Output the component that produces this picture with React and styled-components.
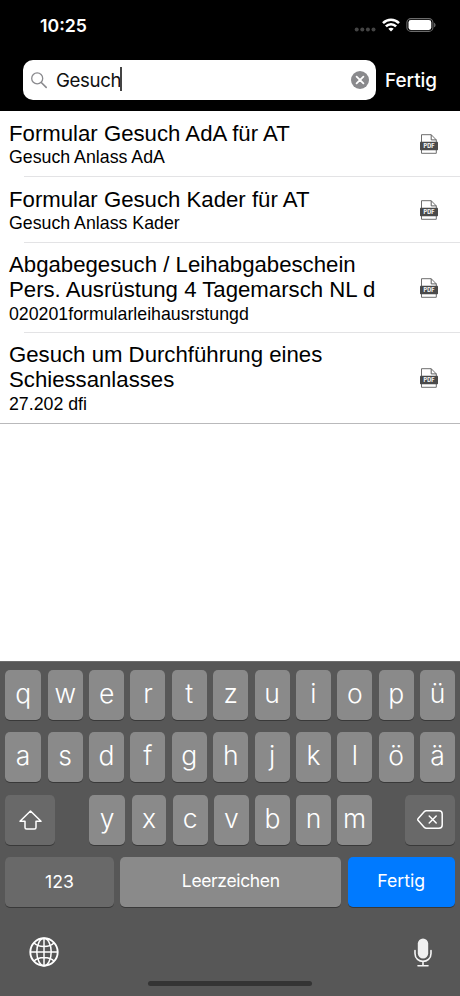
import styled, { createGlobalStyle } from "styled-components"

const results = [
    { title: "Formular Gesuch AdA für AT", subtitle: "Gesuch Anlass AdA", height: 66 },
    { title: "Formular Gesuch Kader für AT", subtitle: "Gesuch Anlass Kader", height: 66 },
    { title: "Abgabegesuch / Leihabgabeschein Pers. Ausrüstung 4 Tagemarsch NL d", subtitle: "020201formularleihausrstungd", height: 90 },
    { title: "Gesuch um Durchführung eines Schiessanlasses", subtitle: "27.202 dfi", height: 91 },
];

const App = () => {
    return (
        <Screen>
            <GlobalStyle />

            <StatusBar>
                <Clock>10:25</Clock>
                <StatusIcons>
                    <CellDots />
                    <WifiIcon />
                    <BatteryIcon />
                </StatusIcons>
            </StatusBar>

            <SearchBar>
                <SearchField>
                    <SearchIcon />
                    <SearchText>Gesuch</SearchText>
                    <Caret />
                    <ClearButton><ClearIcon /></ClearButton>
                </SearchField>
                <DoneButton>Fertig</DoneButton>
            </SearchBar>

            <ResultList>
                {results.map((item) => (
                    <ResultRow key={item.title} $height={item.height}>
                        <ResultContent>
                            <ResultTitle>{item.title}</ResultTitle>
                            <ResultSubtitle>{item.subtitle}</ResultSubtitle>
                        </ResultContent>
                        <PdfIcon />
                    </ResultRow>
                ))}
            </ResultList>

            <Keyboard>
                <KeyRow>
                    {[..."qwertzuiopü"].map((letter) => <LetterKey key={letter}>{letter}</LetterKey>)}
                </KeyRow>
                <KeyRow>
                    {[..."asdfghjklöä"].map((letter) => <LetterKey key={letter}>{letter}</LetterKey>)}
                </KeyRow>
                <KeyRow $split>
                    <ActionKey $width={50}><ShiftIcon /></ActionKey>
                    <LetterGroup>
                        {[..."yxcvbnm"].map((letter) => <LetterKey key={letter}>{letter}</LetterKey>)}
                    </LetterGroup>
                    <ActionKey $width={50}><BackspaceIcon /></ActionKey>
                </KeyRow>
                <KeyRow>
                    <ActionKey $width={109}>123</ActionKey>
                    <SpaceKey>Leerzeichen</SpaceKey>
                    <ActionKey $width={107.5} $primary>Fertig</ActionKey>
                </KeyRow>
                <KeyboardFooter>
                    <GlobeIcon />
                    <MicIcon />
                </KeyboardFooter>
                <HomeIndicator />
            </Keyboard>
        </Screen>
    )
};

const CellDots = () => (
    <svg width="22" height="18" viewBox="0 0 22 18" fill="#444">
        <circle cx="2.7" cy="13.5" r="2" />
        <circle cx="8.3" cy="13.5" r="2" />
        <circle cx="13.9" cy="13.5" r="2" />
        <circle cx="19.5" cy="13.5" r="2" />
    </svg>
);

const WifiIcon = () => (
    <svg width="18" height="14" viewBox="0 0 18 14" fill="none" stroke="#fff" strokeWidth="2.6">
        <path d="M1 5.1C5.6 .7 12.4 .7 17 5.1" />
        <path d="M3.9 8.4C6.8 5.5 11.2 5.5 14.1 8.4" />
        <path d="M9 13.4L6.3 10.7C7.8 9.3 10.2 9.3 11.7 10.7Z" fill="#fff" stroke="none" />
    </svg>
);

const BatteryIcon = () => (
    <svg width="30" height="14" viewBox="0 0 30 14">
        <rect x=".9" y=".6" width="26" height="12.8" rx="4" fill="none" stroke="#6b6b6b" strokeWidth="1.1" />
        <rect x="2.5" y="2.1" width="22.8" height="9.8" rx="2.4" fill="#fff" />
        <path d="M28.2 4.7C29.9 5.4 29.9 8.6 28.2 9.3Z" fill="#777" />
    </svg>
);

const SearchIcon = () => (
    <svg width="17" height="17" viewBox="0 0 17 17" fill="none" stroke="#8a8a8e" strokeWidth="1.3" strokeLinecap="round">
        <circle cx="6.2" cy="6.4" r="5.5" />
        <path d="M10.3 10.5L15.2 15.4" strokeWidth="1.6" />
    </svg>
);

const ClearIcon = () => (
    <svg width="18" height="18" viewBox="0 0 18 18">
        <circle cx="9" cy="9" r="9" fill="#8a8a8d" />
        <path d="M5.6 5.6L12.4 12.4M12.4 5.6L5.6 12.4" stroke="#fff" strokeWidth="1.8" strokeLinecap="round" />
    </svg>
);

const PdfIcon = () => (
    <svg width="18" height="20" viewBox="0 0 18 20">
        <path d="M1.5 19.3V.7H11.2L16.3 5.9V19.3Z" fill="#fff" stroke="#5e5e5e" strokeWidth=".9" />
        <path d="M11.2 .7V5.9H16.3" fill="none" stroke="#5e5e5e" strokeWidth="1" />
        <rect x="0" y="7.8" width="18" height="8.4" rx=".7" fill="#4a4a4a" />
        <text x="9" y="14.1" textAnchor="middle" fill="#f2f2f2" fontFamily="Inter, sans-serif" fontSize="5.5" fontWeight="800">PDF</text>
    </svg>
);

const ShiftIcon = () => (
    <svg width="23" height="20" viewBox="0 0 23 20" fill="none" stroke="#fff" strokeWidth="1.5" strokeLinejoin="round">
        <path d="M11.5 1L22 11.2H17V17.5Q17 19 15.5 19H7.5Q6 19 6 17.5V11.2H1Z" />
    </svg>
);

const BackspaceIcon = () => (
    <svg width="26" height="19" viewBox="0 0 26 19" fill="none" stroke="#fff" strokeWidth="1.5" strokeLinejoin="round" strokeLinecap="round">
        <path d="M9.2 .8H22Q25.2 .8 25.2 4V15Q25.2 18.2 22 18.2H9.2Q8.2 18.2 7.4 17.4L1.2 10.6Q.3 9.5 1.2 8.4L7.4 1.6Q8.2 .8 9.2 .8Z" />
        <path d="M12.2 6L19.2 13M19.2 6L12.2 13" />
    </svg>
);

const GlobeIcon = () => (
    <svg width="30" height="30" viewBox="0 0 30 30" fill="none" stroke="#fff" strokeWidth="1.5">
        <circle cx="15" cy="15" r="13.7" strokeWidth="1.9" />
        <ellipse cx="15" cy="15" rx="7.2" ry="13.7" />
        <path d="M15 1.2V28.8M1.2 15H28.8M4.8 5.7C9.5 10.7 20.5 10.7 25.2 5.7M4.8 24.3C9.5 19.3 20.5 19.3 25.2 24.3" />
    </svg>
);

const MicIcon = () => (
    <svg width="18" height="30" viewBox="0 0 18 30" fill="none" stroke="#f5f5f5" strokeWidth="1.6" strokeLinecap="round">
        <rect x="3.8" y="1.4" width="10.4" height="20" rx="5.2" fill="#f0f0f0" stroke="none" />
        <path d="M1 13.5V16.4C1 27 17 27 17 16.4V13.5M9 24.5V28.5M4 28.8H14" />
    </svg>
);

const GlobalStyle = createGlobalStyle`
    * {
        box-sizing: border-box;
    }

    body {
        margin: 0;
        background: #fff;
    }

    button {
        border: 0;
        padding: 0;
        font-family: inherit;
    }
`;

const Screen = styled.main`
    display: flex;
    flex-direction: column;
    width: 460px;
    height: 996px;
    overflow: hidden;
    background: #fff;
    font-family: Inter, sans-serif;
`;

const StatusBar = styled.header`
    display: flex;
    justify-content: space-between;
    height: 60px;
    padding: 14px 24px 0 40px;
    background: #000;
    color: #fff;
`;

const Clock = styled.time`
    font-size: 17.7px;
    font-weight: 600;
    line-height: 23px;
`;

const StatusIcons = styled.div`
    display: flex;
    align-items: center;
    height: 22.6px;
    gap: 6px;
`;

const SearchBar = styled.section`
    display: flex;
    height: 51px;
    padding: 0 0 11px 22.5px;
    background: #000;
`;

const SearchField = styled.div`
    display: flex;
    align-items: center;
    width: 353.5px;
    height: 40px;
    padding: 0 7px 0 8.5px;
    border-radius: 10px;
    background: #fff;
`;

const SearchText = styled.span`
    margin-left: 8px;
    font-size: 18.7px;
    letter-spacing: -0.4px;
    color: #111;
`;

const Caret = styled.span`
    width: 2px;
    height: 24px;
    margin: -2px 0 0 -1.5px;
    background: #444;
`;

const ClearButton = styled.button`
    display: flex;
    margin-left: auto;
    background: none;
`;

const DoneButton = styled.button`
    margin-left: 9px;
    background: none;
    color: #fff;
    font-size: 18.9px;
    font-weight: 500;
`;

const ResultList = styled.ul`
    flex: 1;
    margin: 0;
    padding: 0;
    list-style: none;
    font-family: "Liberation Sans", Arial, sans-serif;
    color: #000;
`;

const ResultRow = styled.li`
    display: flex;
    align-items: center;
    justify-content: space-between;
    height: ${(props) => props.$height}px;
    padding: 0 22px 0 9px;
    background: linear-gradient(#e3e3e5, #e3e3e5) 24px 100% / 100% 1px no-repeat;

    &:last-child {
        background: none;
        border-bottom: 1px solid #b9b9bb;
    }
`;

const ResultContent = styled.div`
    width: 385px;
`;

const ResultTitle = styled.h2`
    margin: 0;
    font-size: 22.2px;
    font-weight: 400;
    line-height: 25px;
`;

const ResultSubtitle = styled.p`
    margin: 0;
    padding-top: 1.5px;
    font-size: 17.75px;
    line-height: 20px;
`;

const Keyboard = styled.section`
    display: flex;
    flex-direction: column;
    gap: 12.3px;
    height: 335px;
    padding: 8px 5px 0;
    border-top: 1px solid #6d6d6d;
    background: #575757;
    color: #fff;
`;

const KeyRow = styled.div`
    display: flex;
    flex-shrink: 0;
    justify-content: ${(props) => (props.$split ? "space-between" : "flex-start")};
    gap: ${(props) => (props.$split ? 0 : "6.4px")};
    height: 50px;
`;

const Key = styled.button`
    display: flex;
    align-items: center;
    justify-content: center;
    height: 50px;
    border-radius: 5px;
    background: #8a8a8a;
    box-shadow: 0 1px 0 #393939;
    color: #fff;
`;

const LetterKey = styled(Key)`
    flex: 1;
    min-width: 0;
    padding-bottom: 4px;
    font-size: 26.5px;
    font-weight: 350;

    &:first-child {
        flex: none;
        width: 36.3px;
    }
`;

const LetterGroup = styled.div`
    display: flex;
    gap: 6.3px;
    width: 283px;
    margin-left: 1px;
`;

const ActionKey = styled(Key)`
    flex: none;
    width: ${(props) => props.$width}px;
    padding-bottom: ${(props) => (props.$primary ? "3px" : 0)};
    background: ${(props) => (props.$primary ? "#007aff" : "#696969")};
    font-size: 17.7px;
`;

const SpaceKey = styled(Key)`
    flex: 1;
    padding-bottom: 3px;
    font-size: 17.5px;
    letter-spacing: -0.35px;
`;

const KeyboardFooter = styled.div`
    display: flex;
    align-items: center;
    justify-content: space-between;
    height: 32px;
    margin-top: 16.5px;
    padding: 0 23.5px;
`;

const HomeIndicator = styled.div`
    width: 164px;
    height: 5px;
    margin: 1px auto 0;
    border-radius: 3px;
    background: #343434;
`;

export default App;
